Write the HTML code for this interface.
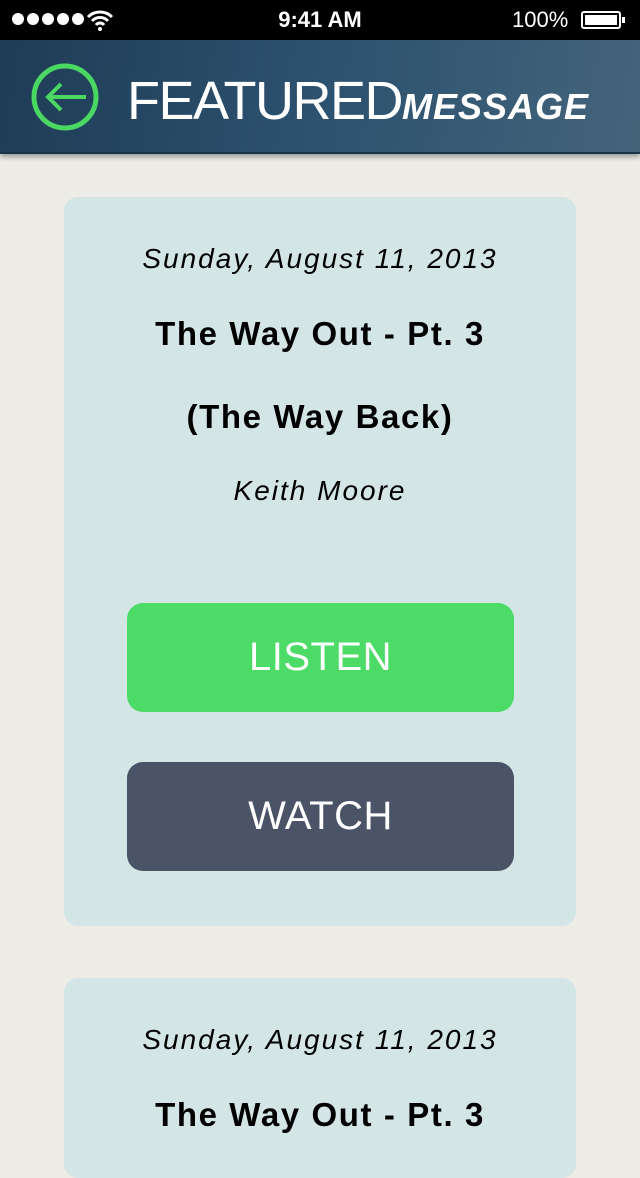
<!DOCTYPE html>
<html><head><meta charset="utf-8"><style>
*{margin:0;padding:0;box-sizing:border-box}
body{width:640px;height:1136px;overflow:hidden;background:#eeece7;font-family:"Liberation Sans",sans-serif;position:relative}
.sb{position:absolute;top:0;left:0;width:640px;height:40px;background:#000;color:#fff;font-size:22px}
.hdr{position:absolute;top:40px;left:0;width:640px;height:114px;background:linear-gradient(100deg,#1f3c55 0%,#2c5270 50%,#44647a 100%);box-shadow:0 3px 5px rgba(0,0,0,.35);border-bottom:2px solid #1a3347}
.t{position:absolute;left:127px;top:34px;color:#fff;font-size:54px;font-weight:normal;letter-spacing:-1.5px;line-height:54px;white-space:nowrap}
.t i{font-size:36px;font-weight:bold;letter-spacing:1px}
.card{position:absolute;left:64px;width:512px;background:#d3e6e5;border-radius:14px;text-align:center;color:#000}
.d{font-style:italic;font-size:28px;letter-spacing:2px}
.h{font-weight:bold;font-size:33px;letter-spacing:1.6px}
.btn{position:absolute;left:63px;width:387px;height:109px;border-radius:16px;color:#fff;font-size:40px;line-height:109px;letter-spacing:0.5px}
</style></head><body>
<div class="sb">
<div style="position:absolute;left:12px;top:13px;display:flex;gap:3px"><span style="width:12px;height:12px;border-radius:50%;background:#fff"></span><span style="width:12px;height:12px;border-radius:50%;background:#fff"></span><span style="width:12px;height:12px;border-radius:50%;background:#fff"></span><span style="width:12px;height:12px;border-radius:50%;background:#fff"></span><span style="width:12px;height:12px;border-radius:50%;background:#fff"></span></div>
<svg style="position:absolute;left:86px;top:9px" width="28" height="22" viewBox="0 0 28 22"><path d="M2 8a17 17 0 0 1 24 0M6 12a11 11 0 0 1 16 0M10 16a5 5 0 0 1 8 0" stroke="#fff" stroke-width="3" fill="none"/><circle cx="14" cy="20" r="2" fill="#fff"/></svg>
<div style="position:absolute;left:0;width:640px;top:7px;text-align:center;font-weight:bold">9:41 AM</div>
<div style="position:absolute;left:512px;top:7px">100%</div>
<div style="position:absolute;left:581px;top:11px;width:40px;height:18px;border:2px solid #fff;border-radius:3px;padding:2px"><div style="background:#fff;width:100%;height:100%"></div></div>
<div style="position:absolute;left:622px;top:17px;width:3px;height:6px;background:#fff"></div>
</div>
<div class="hdr">
<svg style="position:absolute;left:30px;top:22px" width="70" height="70" viewBox="0 0 70 70"><circle cx="35" cy="35" r="31" stroke="#4ad762" stroke-width="5" fill="none"/><path d="M56 35H18M31 22L18 35L31 48" stroke="#4ad762" stroke-width="4" fill="none"/></svg>
<div class="t">FEATURED<i>MESSAGE</i></div>
</div>
<div class="card" style="top:197px;height:729px">
<div class="d" style="position:absolute;top:46px;width:100%">Sunday, August 11, 2013</div>
<div class="h" style="position:absolute;top:118px;width:100%">The Way Out - Pt. 3</div>
<div class="h" style="position:absolute;top:201px;width:100%">(The Way Back)</div>
<div class="d" style="position:absolute;top:278px;width:100%">Keith Moore</div>
<div class="btn" style="top:406px;background:#4cdb66">LISTEN</div>
<div class="btn" style="top:565px;background:#4b5466">WATCH</div>
</div>
<div class="card" style="top:978px;height:200px">
<div class="d" style="position:absolute;top:46px;width:100%">Sunday, August 11, 2013</div>
<div class="h" style="position:absolute;top:118px;width:100%">The Way Out - Pt. 3</div>
</div>
</body></html>
